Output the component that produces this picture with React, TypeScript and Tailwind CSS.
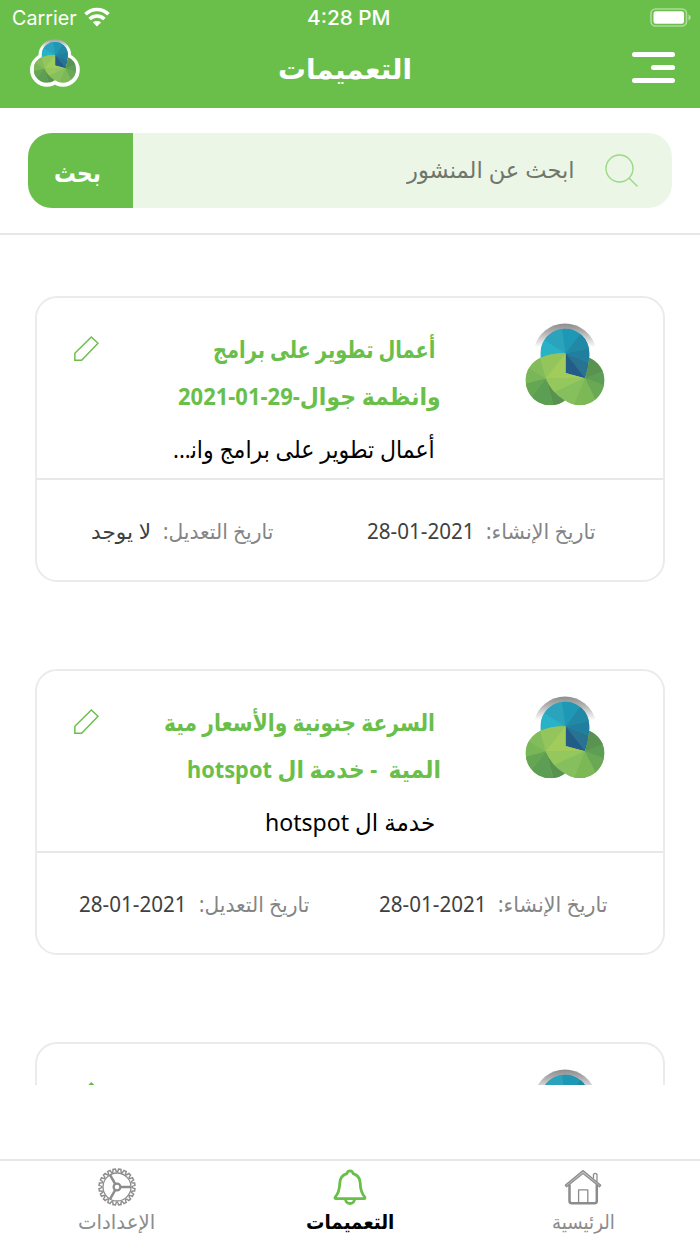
import { useLayoutEffect, useRef, useState, type ReactNode } from "react";
import clsx from "clsx";

interface FitTextProps {
  children: ReactNode;
  className?: string;
}

// Squeezes or stretches a single line so it fills the width of its box
function FitText({ children, className }: FitTextProps) {
  const box = useRef<HTMLSpanElement>(null);
  const text = useRef<HTMLSpanElement>(null);
  const [scale, setScale] = useState(1);

  useLayoutEffect(() => {
    if (box.current && text.current) {
      setScale(box.current.clientWidth / text.current.offsetWidth);
    }
  }, [children]);

  return (
    <span ref={box} className={clsx("flex shrink-0 justify-start whitespace-nowrap", className)}>
      <span
        ref={text}
        className="block shrink-0 ltr:origin-left rtl:origin-right"
        style={{ transform: `scaleX(${scale})` }}
      >
        {children}
      </span>
    </span>
  );
}

function LogoShapes() {
  return (
    <>
      <defs>
        <clipPath id="lobe-top">
          <path d="M47 120 V96 A73 73 0 0 1 193 90 Q195 130 180 169 L122 153 Z" />
        </clipPath>
        <clipPath id="lobe-left">
          <path d="M47 107 Q82 93 122 94 V153 L180 169 L119 236 A74 74 0 0 1 2 175 A74 74 0 0 1 47 107 Z" />
        </clipPath>
        <clipPath id="lobe-right">
          <path d="M193 107 A74 74 0 0 1 238 175 A74 74 0 0 1 120 235 Q80 213 62 169 L122 153 L180 169 Q190 140 193 107 Z" />
        </clipPath>
      </defs>
      <g clipPath="url(#lobe-top)">
        <path d="M40 15 H200 V175 H40 Z" fill="#2a9fba" />
        <path d="M122 94 L20 150 V20 L60 55 Z" fill="#27b2c8" />
        <path d="M122 94 L60 55 L50 0 H108 Z" fill="#2ca3bd" />
        <path d="M122 94 L108 0 H180 L165 37 Z" fill="#1e98b4" />
        <path d="M122 94 L165 37 L200 0 V77 Z" fill="#2189a6" />
        <path d="M122 94 L200 77 V122 L192 121 Z" fill="#207f9f" />
        <path d="M122 94 L200 124 V175 H180 Z" fill="#287392" />
      </g>
      <g clipPath="url(#lobe-left)">
        <path d="M0 90 H185 V250 H0 Z" fill="#97c65a" />
        <path d="M62 169 L43 105 L90 80 L122 94 Z" fill="#93c55c" />
        <path d="M62 169 L12 138 L43 100 Z" fill="#83bc5b" />
        <path d="M62 169 L0 185 V130 L12 138 Z" fill="#78b658" />
        <path d="M62 169 L0 185 V250 L20 223 Z" fill="#65a653" />
        <path d="M62 169 L20 223 L40 260 H88 Z" fill="#5c9e54" />
        <path d="M62 169 L85 250 H120 V237 Z" fill="#589250" />
      </g>
      <g clipPath="url(#lobe-right)">
        <path d="M60 90 H240 V250 H60 Z" fill="#83bc5b" />
        <path d="M62 169 H180 L88 211 L60 190 Z" fill="#94c75c" />
        <path d="M180 169 L88 211 L110 260 H145 Z" fill="#86bf5e" />
        <path d="M180 169 L145 255 H225 Z" fill="#7cb856" />
        <path d="M180 169 L215 240 L250 193 Z" fill="#69a955" />
        <path d="M180 169 L250 194 V135 Z" fill="#5c9f54" />
        <path d="M180 169 L193 100 H230 L242 143 Z" fill="#5a9252" />
      </g>
      <path d="M122 94 L180 169 L122 153 Z" fill="#235c87" />
      <path d="M122 94 V153 L180 169 L62 169 Z" fill="#a1cb5b" />
    </>
  );
}

function Logo() {
  return (
    <svg viewBox="0 0 240 252" className="h-[84px] w-20">
      <defs>
        <linearGradient id="halo" x1="0" y1="0" x2="0" y2="1">
          <stop offset="0" stopColor="#8d8d8d" />
          <stop offset="0.35" stopColor="#b0aeae" />
          <stop offset="1" stopColor="#ffffff" />
        </linearGradient>
      </defs>
      <path d="M28 76 A95 95 0 0 1 212 76 L190 76 H50 Z" fill="url(#halo)" />
      <LogoShapes />
    </svg>
  );
}

function HeaderLogo() {
  return (
    <svg viewBox="0 0 300 288" className="h-12 w-[50px]">
      <defs>
        <linearGradient id="halo-white" x1="0" y1="0" x2="0" y2="1">
          <stop offset="0" stopColor="#9a9a9a" />
          <stop offset="0.3" stopColor="#ffffff" />
        </linearGradient>
      </defs>
      <circle cx="149" cy="98" r="98" fill="url(#halo-white)" />
      <circle cx="101" cy="185" r="101" fill="#fff" />
      <circle cx="198" cy="185" r="101" fill="#fff" />
      <g transform="translate(20 -4) scale(1.075 1.065)">
        <LogoShapes />
      </g>
    </svg>
  );
}

function StatusBar() {
  return (
    <div dir="ltr" className="flex h-9 items-center justify-between pl-[11px] pr-[9px] text-white">
      <div className="flex w-[121px] items-center gap-2">
        <FitText className="w-[65px] font-[Inter,sans-serif] text-[20px] leading-9">Carrier</FitText>
        <svg viewBox="0 0 26 20" className="mb-0.5 h-5 w-[26px]" fill="none" stroke="currentColor" strokeWidth="3.6">
          <path d="M1.5 7.3 C8 0.9 18 0.9 24.5 7.3" />
          <path d="M5.6 12 C9.8 8 16.2 8 20.4 12" />
          <path d="M13 19.5 L9 15.4 C11 13.5 15 13.5 17 15.4 Z" fill="currentColor" stroke="none" />
        </svg>
      </div>
      <FitText className="w-[84px] font-[Inter,sans-serif] text-[20px] font-medium leading-9">4:28 PM</FitText>
      <div className="flex w-[120px] justify-end">
        <svg viewBox="0 0 41 19" className="mb-0.5 h-[19px] w-[41px]">
          <rect x="1" y="1" width="35.5" height="17" rx="4.5" fill="none" stroke="#fff" strokeOpacity="0.45" strokeWidth="1.6" />
          <rect x="3.5" y="3.3" width="30.5" height="12.4" rx="2.3" fill="#fff" />
          <path d="M38.5 6.5 Q40.7 7.5 40.7 9.5 T38.5 12.5 Z" fill="#fff" fillOpacity="0.5" />
        </svg>
      </div>
    </div>
  );
}

function Header() {
  return (
    <header className="h-[108px] shrink-0 bg-[#6abf4b]">
      <StatusBar />
      <div className="flex items-start pl-[30px] pr-[25px] pt-[3px] text-white">
        <div className="mt-[13px] flex w-[43px] flex-col items-start gap-2">
          <div className="h-[5px] w-full rounded-full bg-white" />
          <div className="h-[5px] w-6 rounded-full bg-white" />
          <div className="h-[5px] w-full rounded-full bg-white" />
        </div>
        <FitText className="mr-[220px] mt-[9px] w-[134px] text-[28px] font-bold leading-10">التعميمات</FitText>
        <div className="mr-auto">
          <HeaderLogo />
        </div>
      </div>
    </header>
  );
}

function SearchBar() {
  return (
    <div className="h-[127px] shrink-0 border-b-2 border-[#e6e6e6] px-7 pt-[25px]">
      <div className="flex h-[75px] w-[644px] items-center overflow-hidden rounded-3xl bg-[#ebf6e7]">
        <svg viewBox="0 0 34 34" className="mr-[33px] h-[34px] w-[34px]" fill="none" stroke="#9ad985" strokeWidth="1.4">
          <circle cx="14.5" cy="14.5" r="13.5" />
          <path d="M24 24 L32.5 32.5" />
        </svg>
        <FitText className="mb-1 mr-[30px] w-[168px] text-[23px] leading-[40px] text-[#6f776c]">ابحث عن المنشور</FitText>
        <button className="mr-auto flex h-full w-[105px] items-center justify-center bg-[#6abf4b] pr-[7px] pt-1 text-[25px] font-bold text-white">
          <FitText className="w-[47px]">بحث</FitText>
        </button>
      </div>
    </div>
  );
}

function PencilIcon() {
  return (
    <svg viewBox="0 0 75 75" className="h-[25px] w-[25px]" fill="none" stroke="#6abf4b" strokeWidth="4.4">
      <path d="M52 3 L72 22 L23 72.5 H2.5 V52 Z" />
    </svg>
  );
}

interface Post {
  titleTop: string;
  titleTopWidth: string;
  titleBottom: string;
  titleBottomWidth: string;
  body: string;
  bodyWidth: string;
  created: string;
  modified: string;
  modifiedWidth: string;
  datesPadding: string;
  datesGap: string;
}

const posts: Post[] = [
  {
    titleTop: "أعمال تطوير على برامج",
    titleTopWidth: "w-[222px]",
    titleBottom: "وانظمة جوال-29-01-2021",
    titleBottomWidth: "w-[263px]",
    body: "أعمال تطوير على برامج وان\u200d...",
    bodyWidth: "w-[262px]",
    created: "28-01-2021",
    modified: "لا يوجد",
    modifiedWidth: "w-[60px]",
    datesPadding: "pr-[67px]",
    datesGap: "mr-[94px]",
  },
  {
    titleTop: "السرعة جنونية والأسعار مية",
    titleTopWidth: "w-[271px]",
    titleBottom: "المية \u00a0- خدمة ال hotspot",
    titleBottomWidth: "w-[254px]",
    body: "خدمة ال hotspot",
    bodyWidth: "w-[170px]",
    created: "28-01-2021",
    modified: "28-01-2021",
    modifiedWidth: "w-[108px]",
    datesPadding: "pr-[55px]",
    datesGap: "mr-[70px]",
  },
];

function CardShell({ children, footer }: { children?: ReactNode; footer?: ReactNode }) {
  return (
    <article className="h-[286px] w-[630px] shrink-0 rounded-[22px] border-2 border-[#ebebeb]">
      <div className="flex h-[182px] items-start border-b-2 border-[#e8e8e8] pl-[37px] pr-[58px] pt-6">
        <Logo />
        {children}
        <div className="mr-auto pt-3.5">
          <PencilIcon />
        </div>
      </div>
      {footer}
    </article>
  );
}

function PostCard({ post }: { post: Post }) {
  return (
    <CardShell
      footer={
        <div className={clsx("flex h-[100px] items-center pt-[3px] text-[21px] text-[#404040]", post.datesPadding)}>
          <FitText className="w-[110px] text-[#858585]">تاريخ الإنشاء:</FitText>
          <FitText className="mr-[11px] w-[108px]">
            <bdi dir="ltr">{post.created}</bdi>
          </FitText>
          <FitText className={clsx("w-[110px] text-[#858585]", post.datesGap)}>تاريخ التعديل:</FitText>
          <FitText className={clsx("mr-3", post.modifiedWidth)}>
            <bdi>{post.modified}</bdi>
          </FitText>
        </div>
      }
    >
      <div className="mr-[84px] flex flex-col text-[24px]">
        <FitText className={clsx("mr-1.5 mt-[3px] h-[47px] font-bold leading-[47px] text-[#6abf4b]", post.titleTopWidth)}>
          {post.titleTop}
        </FitText>
        <FitText className={clsx("h-[47px] font-bold leading-[47px] text-[#6abf4b]", post.titleBottomWidth)}>
          {post.titleBottom}
        </FitText>
        <FitText className={clsx("mr-1.5 mt-1.5 h-[47px] leading-[47px] text-black", post.bodyWidth)}>
          {post.body}
        </FitText>
      </div>
    </CardShell>
  );
}

function HomeIcon() {
  return (
    <svg viewBox="0 0 38 36" className="h-9 w-[38px]" fill="none" stroke="#8c8c8c" strokeLinejoin="round">
      <path d="M1.2 16.2 L19 1.5 L36.8 16.2 L35.5 17.8 L19 4.6 L2.5 17.8 Z" strokeWidth="1.2" fill="#bdbdbd" />
      <path d="M5.5 15.5 V32 Q5.5 34.3 8 34.3 H30.3 Q32.8 34.3 32.8 32 V15.5" strokeWidth="2.5" />
      <path d="M29.5 9.5 V5.5 Q31.3 3.2 33 5.5 V12.5" strokeWidth="1.3" />
      <path d="M14.6 33.5 V20.8 H23.8 V33.5" strokeWidth="1.3" />
    </svg>
  );
}

function BellIcon() {
  return (
    <svg viewBox="0 0 34 36" className="h-9 w-[34px]" fill="none" stroke="#6abf4b" strokeWidth="2.8" strokeLinejoin="round">
      <path d="M17 1.8 C15 1.8 14.2 3 13.8 4.6 C9.2 6 7 9.3 6.8 14 C6.6 21 5.3 24.5 2.2 28.2 Q1.5 29.6 3 29.6 H31 Q32.5 29.6 31.8 28.2 C28.7 24.5 27.4 21 27.2 14 C27 9.3 24.8 6 20.2 4.6 C19.8 3 19 1.8 17 1.8 Z" />
      <path d="M12.4 30.5 Q13.3 34.5 17 34.5 T21.6 30.5" />
    </svg>
  );
}

const teeth = Array.from({ length: 20 }, (_, i) => i * 18);

function GearIcon() {
  return (
    <svg viewBox="-19 -19 38 38" className="h-[38px] w-[38px]" fill="none" stroke="#8c8c8c" strokeWidth="1.5">
      {teeth.map((angle) => (
        <path key={angle} d="M-2.4 -14.7 Q-1.4 -15.2 -1.2 -18 H1.2 Q1.4 -15.2 2.4 -14.7" transform={`rotate(${angle + 9})`} />
      ))}
      <circle r="14" strokeWidth="1.3" />
      <circle r="3.4" strokeWidth="2.2" />
      {[90, 210, 330].map((angle) => (
        <path key={angle} d="M0 -4 V-14" strokeWidth="2.5" transform={`rotate(${angle})`} />
      ))}
    </svg>
  );
}

function TabBar() {
  return (
    <nav className="flex h-[85px] shrink-0 border-t-2 border-[#e6e6e6] text-[20px] leading-7 text-[#8c8c8c]">
      <button className="flex flex-1 flex-col items-center pt-2">
        <HomeIcon />
        <FitText className="mt-[3px] w-[63px]">الرئيسية</FitText>
      </button>
      <button className="flex flex-1 flex-col items-center pt-2">
        <BellIcon />
        <FitText className="mt-[3px] w-[88px] font-bold text-black">التعميمات</FitText>
      </button>
      <button className="flex flex-1 flex-col items-center pt-[7px]">
        <GearIcon />
        <FitText className="mt-0.5 w-[77px]">الإعدادات</FitText>
      </button>
    </nav>
  );
}

export default function App() {
  return (
    <div
      dir="rtl"
      className="flex h-[1244px] w-[700px] flex-col overflow-hidden bg-white font-['Noto_Sans','DejaVu_Sans',sans-serif]"
    >
      <Header />
      <SearchBar />
      <main className="flex h-[850px] shrink-0 flex-col items-center gap-[87px] overflow-hidden pt-[61px]">
        {posts.map((post) => (
          <PostCard key={post.titleTop} post={post} />
        ))}
        <CardShell />
      </main>
      <div className="flex-1" />
      <TabBar />
    </div>
  );
}
